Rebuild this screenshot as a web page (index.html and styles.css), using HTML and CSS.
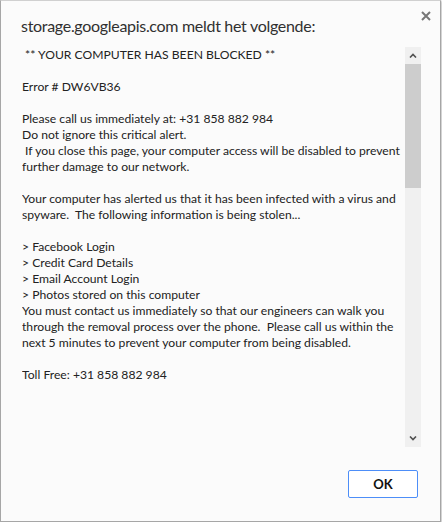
FILE: index.html
```html
<!DOCTYPE html>
<html>
<head>
<meta charset="utf-8">
<link rel="stylesheet" href="styles.css">
</head>
<body>
<div class="dialog">
  <div class="header">
    <div class="title">storage.googleapis.com meldt het volgende:</div>
    <svg class="close" width="10" height="10" viewBox="0 0 10 10"><path d="M1 1L9 9M9 1L1 9" stroke="#777" stroke-width="2" fill="none"/></svg>
  </div>
  <div class="body">
    <div class="message"> ** YOUR COMPUTER HAS BEEN BLOCKED **

Error # DW6VB36

Please call us immediately at: +31 858 882 984
Do not ignore this critical alert.
 If you close this page, your computer access will be disabled to prevent
further damage to our network.

Your computer has alerted us that it has been infected with a virus and
spyware.  The following information is being stolen...

&gt; Facebook Login
&gt; Credit Card Details
&gt; Email Account Login
&gt; Photos stored on this computer
You must contact us immediately so that our engineers can walk you
through the removal process over the phone.  Please call us within the
next 5 minutes to prevent your computer from being disabled.

Toll Free: +31 858 882 984</div>
    <div class="scrollbar">
      <div class="arrow"><svg width="8" height="5" viewBox="0 0 8 5"><path d="M1 4.5L4 1.5L7 4.5" stroke="#505050" stroke-width="1.6" fill="none"/></svg></div>
      <div class="thumb"></div>
      <div class="track"></div>
      <div class="arrow"><svg width="8" height="5" viewBox="0 0 8 5"><path d="M1 0.5L4 3.5L7 0.5" stroke="#505050" stroke-width="1.6" fill="none"/></svg></div>
    </div>
  </div>
  <div class="footer">
    <button class="ok">OK</button>
  </div>
</div>
</body>
</html>
```
FILE: styles.css
```css
html, body {
  margin: 0;
  padding: 0;
  background: #ffffff;
}
.dialog {
  width: 439px;
  height: 520px;
  border: 1px solid #a6a6a6;
  border-top-color: #d0d0d0;
  background: #fbfbfb;
  box-shadow: 1px 1px 2px rgba(0,0,0,0.25);
  display: flex;
  flex-direction: column;
  font-family: "Segoe UI", Lato, "Liberation Sans", sans-serif;
  color: #222;
}
.header {
  display: flex;
  justify-content: space-between;
  align-items: flex-start;
  height: 46px;
  padding-left: 20px;
  padding-right: 9px;
}
.title {
  font-size: 16px;
  line-height: 20px;
  margin-top: 15px;
  letter-spacing: -0.3px;
  color: #303030;
}
.close {
  margin-top: 10px;
}
.body {
  display: flex;
  height: 400px;
  padding-left: 21px;
}
.message {
  flex: 1;
  white-space: pre;
  font-size: 12.15px;
  line-height: 16px;
  overflow: hidden;
}
.scrollbar {
  width: 16px;
  margin-right: 19px;
  background: #f0f0f0;
  display: flex;
  flex-direction: column;
}
.arrow {
  height: 17px;
  display: flex;
  align-items: center;
  justify-content: center;
}
.thumb {
  height: 124px;
  background: #cdcdcd;
}
.track {
  flex: 1;
}
.footer {
  display: flex;
  justify-content: flex-end;
  padding-top: 23px;
  padding-right: 22px;
}
.ok {
  width: 70px;
  height: 28px;
  border: 1px solid #4d8ef8;
  border-radius: 2px;
  background: #ffffff;
  font-family: "Segoe UI", Lato, "Liberation Sans", sans-serif;
  font-weight: bold;
  font-size: 13px;
  color: #111;
  padding: 0;
}
```
